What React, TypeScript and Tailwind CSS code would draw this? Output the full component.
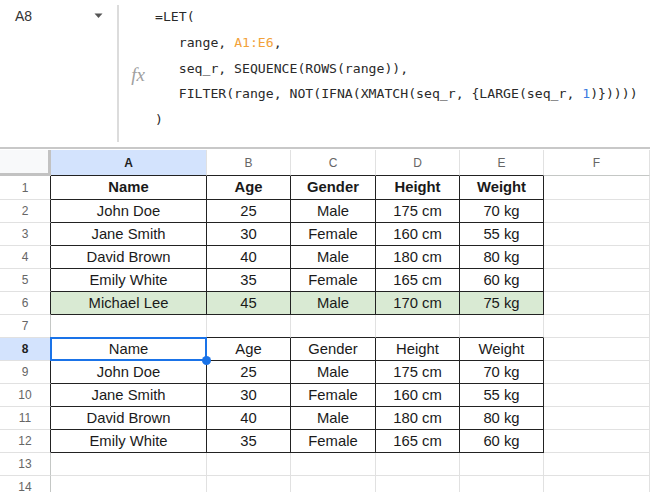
import React from "react"

const cols = ["A", "B", "C", "D", "E", "F"]

type Row = { cells: string[]; bold?: boolean; green?: boolean; table?: boolean }

const people = [
  ["John Doe", "25", "Male", "175 cm", "70 kg"],
  ["Jane Smith", "30", "Female", "160 cm", "55 kg"],
  ["David Brown", "40", "Male", "180 cm", "80 kg"],
  ["Emily White", "35", "Female", "165 cm", "60 kg"],
]

const rows: Row[] = [
  { cells: ["Name", "Age", "Gender", "Height", "Weight"], bold: true, table: true },
  ...people.map((p) => ({ cells: p, table: true })),
  { cells: ["Michael Lee", "45", "Male", "170 cm", "75 kg"], green: true, table: true },
  { cells: [] },
  { cells: ["Name", "Age", "Gender", "Height", "Weight"], table: true },
  ...people.map((p) => ({ cells: p, table: true })),
  { cells: [] },
  { cells: [] },
]

// true when row r (0-based) / column c (0-based, A=0) is inside one of the tables
const inTable = (r: number, c: number) => r >= 0 && r < rows.length && c >= 0 && c < 5 && !!rows[r].table

function FormulaBar() {
  return (
    <div className="h-[150px] flex flex-col">
      <div className="h-[147px] flex">
        <div className="w-[117px] flex justify-between pl-[15px] pr-[14px] pt-[6px]">
          <span className="text-[14px] text-[#333]">A8</span>
          <svg width="9" height="6" viewBox="0 0 9 6" className="mt-[7px]">
            <path d="M0.5 0.5 L8.5 0.5 L4.5 5 Z" fill="#555" />
          </svg>
        </div>
        <div className="w-[2px] my-[5px] bg-[#dcdcdc]" />
        <div className="w-[36px] flex items-center justify-center pl-[2px]">
          <span className="font-['Liberation_Serif',serif] italic text-[19px] text-[#a0a0a0] mt-[4px]">fx</span>
        </div>
        <pre className="pt-[4px] leading-[25.75px] text-[13.15px] text-[#2a2a2a] font-['DejaVu_Sans_Mono',monospace]">
          {"=LET(\n   range, "}
          <span className="text-[#f2a23a]">A1:E6</span>
          {",\n   seq_r, SEQUENCE(ROWS(range)),\n   FILTER(range, NOT(IFNA(XMATCH(seq_r, {LARGE(seq_r, "}
          <span className="text-[#3b7be0]">1</span>
          {")}))))\n)"}
        </pre>
      </div>
      <div className="h-[2px] bg-[#c8c8c8]" />
    </div>
  )
}

function Sheet() {
  return (
    <div className="grid grid-cols-[51px_156px_84px_85px_84px_84px_106px] grid-rows-[26px_24px] auto-rows-[23px]">
      <div className="bg-[#f8f9fa] border-r-[3px] border-b-[3px] border-[#c2c2c2]" />
      {cols.map((c, i) => (
        <div
          key={c}
          className={`flex items-center justify-center text-[12px] border-b ${
            i === 0 ? "bg-[#d3e3fd] text-[#1f1f1f] font-bold" : "bg-white text-[#666]"
          } ${inTable(0, i) ? "border-b-[#222]" : "border-b-[#c4c7c5]"} border-r border-r-[#e1e1e1]`}
        >
          {c}
        </div>
      ))}
      {rows.map((row, r) => (
        <React.Fragment key={r}>
          <div
            className={`flex items-center justify-center text-[12px] border-b border-b-[#e1e1e1] border-r ${
              inTable(r, 0) ? "border-r-[#222]" : "border-r-[#c4c7c5]"
            } ${r === 7 ? "bg-[#d3e3fd] text-[#1f1f1f] font-bold" : "bg-white text-[#666]"}`}
          >
            {r + 1}
          </div>
          {cols.map((_, c) => {
            const here = inTable(r, c)
            const darkRight = here || inTable(r, c + 1)
            const darkBottom = here || inTable(r + 1, c)
            return (
              <div
                key={c}
                className={`relative flex items-center justify-center text-[14.8px] text-[#1a1a1a] border-r border-b ${
                  darkRight ? "border-r-[#222]" : "border-r-[#e1e1e1]"
                } ${darkBottom ? "border-b-[#222]" : "border-b-[#e1e1e1]"} ${
                  here && row.green ? "bg-[#d9ead3]" : "bg-white"
                } ${row.bold ? "font-bold" : ""}`}
              >
                {row.cells[c] ?? ""}
                {r === 7 && c === 0 && (
                  <>
                    <div className="absolute -left-px -top-px -right-px -bottom-px border-2 border-[#1a73e8]" />
                    <div className="absolute -right-[5px] -bottom-[5px] w-[9px] h-[9px] rounded-full bg-[#1a73e8] z-10" />
                  </>
                )}
              </div>
            )
          })}
        </React.Fragment>
      ))}
    </div>
  )
}

export default function App() {
  return (
    <div className="w-[650px] h-[492px] overflow-hidden bg-white font-['Liberation_Sans',Arial,sans-serif]">
      <FormulaBar />
      <Sheet />
    </div>
  )
}
